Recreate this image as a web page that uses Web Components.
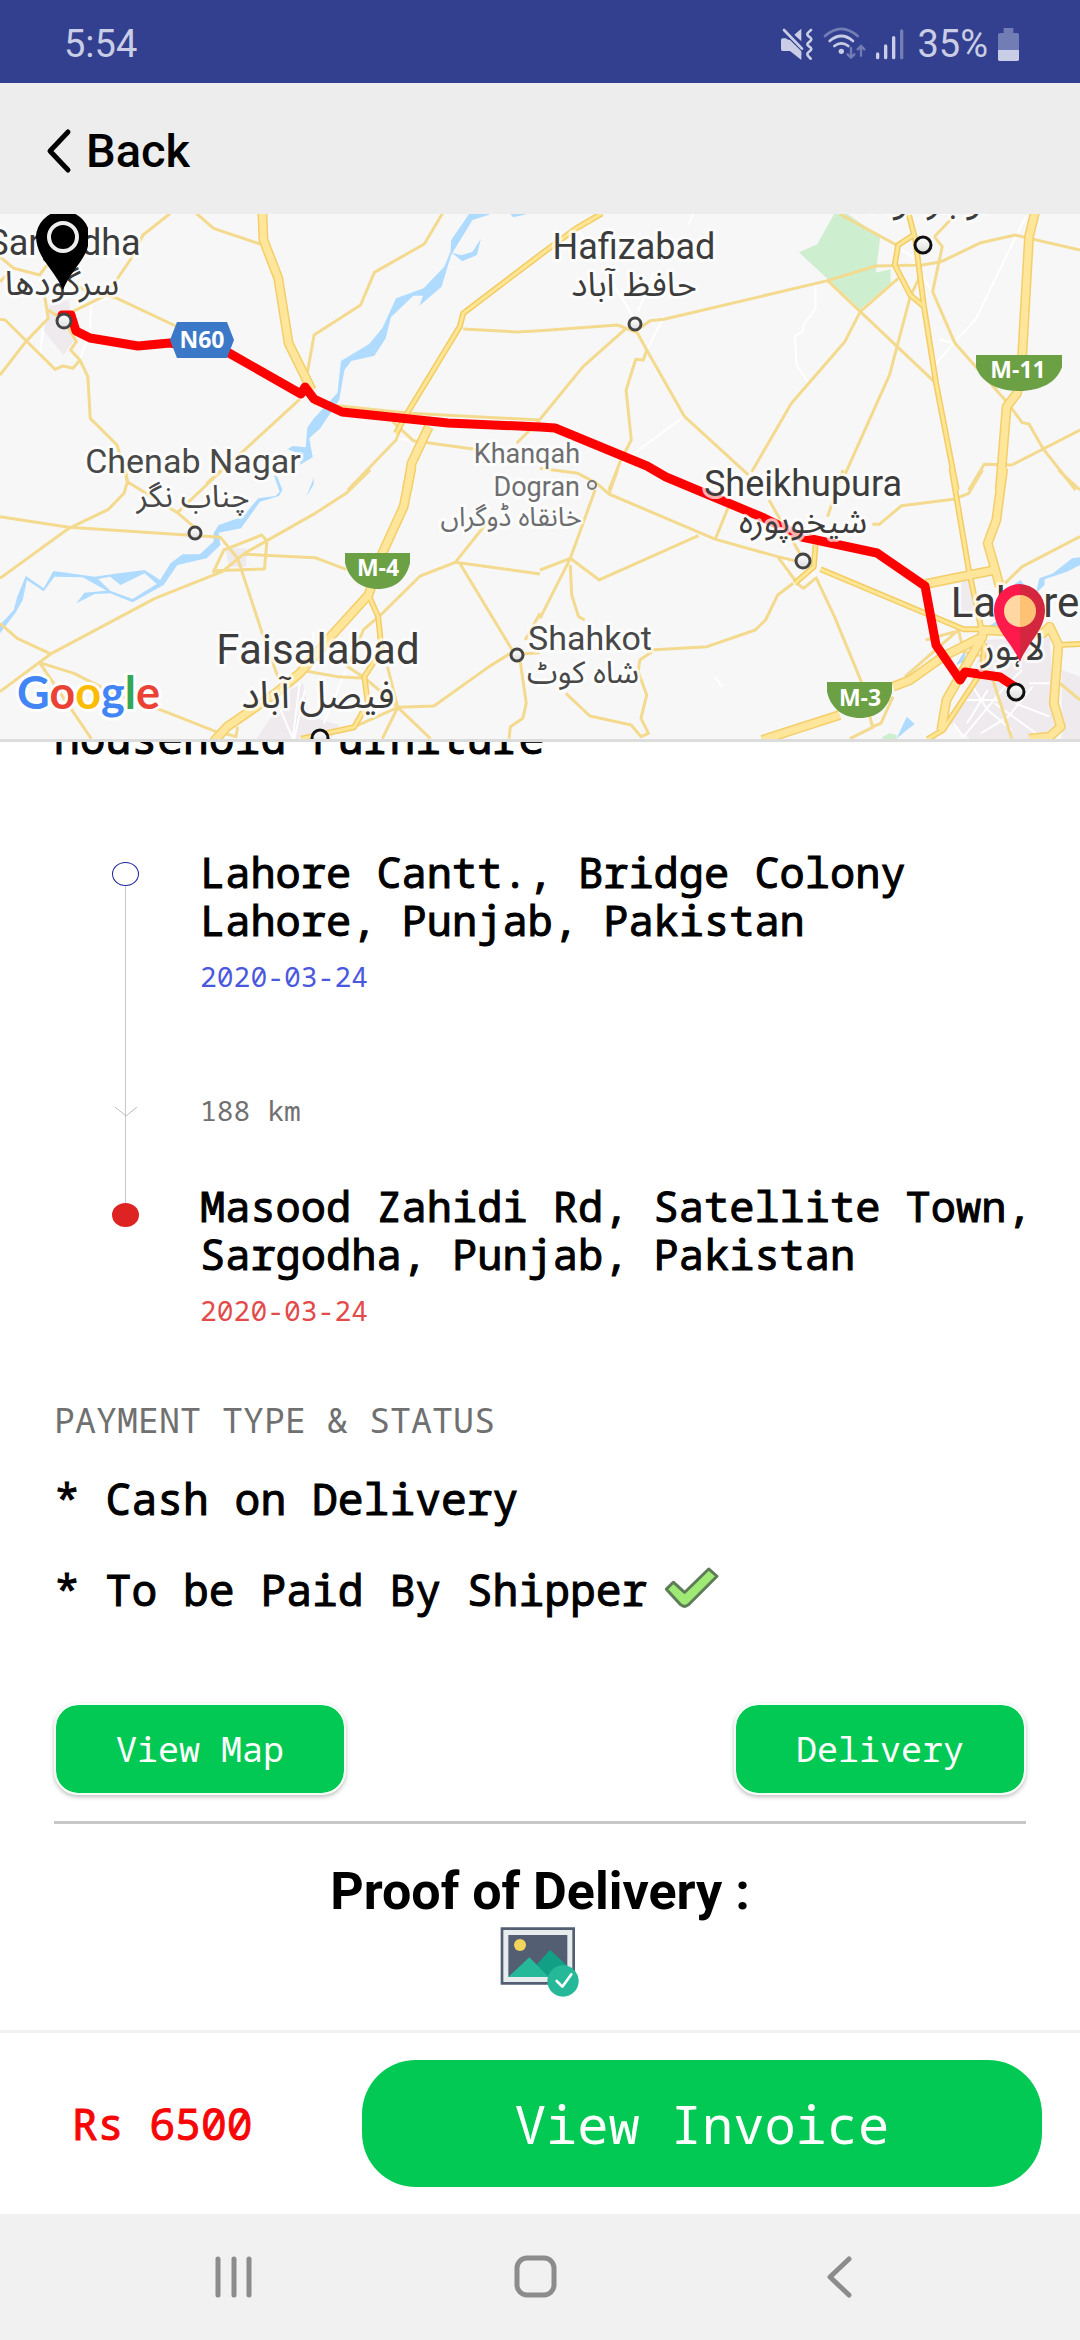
<!DOCTYPE html>
<html lang="en">
<head>
<meta charset="utf-8">
<meta name="viewport" content="width=device-width, initial-scale=1">
<title>Shipment</title>
<style>
  :root {
    --mono: "Droid Sans Mono", "Noto Sans Mono", "DejaVu Sans Mono", monospace;
    --sans: Roboto, sans-serif;
    --green: #02c953;
  }
  body { margin: 0; background: #fff; color: #000; font-family: var(--mono); }
</style>
</head>
<body>
<app-screen>
  <status-bar slot="top" time="5:54" battery="35%"></status-bar>
  <back-header slot="top">Back</back-header>
  <route-map slot="top"></route-map>

  <shipment-details>
    <span slot="title">Household Furniture</span>
    <route-stop slot="route" kind="start" date="2020-03-24">Lahore Cantt., Bridge Colony Lahore, Punjab, Pakistan</route-stop>
    <route-stop slot="route" kind="distance">188 km</route-stop>
    <route-stop slot="route" kind="end" date="2020-03-24">Masood Zahidi Rd, Satellite Town, Sargodha, Punjab, Pakistan</route-stop>
    <payment-line slot="payment">* Cash on Delivery</payment-line>
    <payment-line slot="payment" done>* To be Paid By Shipper</payment-line>
    <green-button slot="actions">View Map</green-button>
    <green-button slot="actions">Delivery</green-button>
  </shipment-details>

  <price-bar slot="bottom" price="Rs 6500"><green-button size="large">View Invoice</green-button></price-bar>
  <system-nav slot="bottom"></system-nav>
</app-screen>

<script>
!(function () {
  // small helper: every element gets an open shadow root with its own style and markup
  const shadow = (el, css, html) => {
    el.attachShadow({ mode: "open" }).innerHTML = `<style>*{box-sizing:border-box}${css}</style>${html}`;
  };

  // ********************************************************** <app-screen>
  customElements.define(
    "app-screen",
    class extends HTMLElement {
      constructor() {
        super();
        shadow(
          this,
          /* css */ `
          :host{display:flex;flex-direction:column;height:100vh}
          header,footer{flex:none}
          main{flex:1;min-height:0;overflow:hidden}`,
          /* html */ `<header><slot name="top"></slot></header><main><slot></slot></main><footer><slot name="bottom"></slot></footer>`
        );
      }
    }
  );

  // ********************************************************** <status-bar>
  customElements.define(
    "status-bar",
    class extends HTMLElement {
      constructor() {
        super();
        shadow(
          this,
          /* css */ `
          :host{display:flex;align-items:center;gap:9px;height:83px;padding:4px 60px 0 64px;box-sizing:border-box;
            background:#33408f;color:#c9cde5;font:38px/44px var(--sans)}
          .time{flex:1}
          .level{padding-left:4px}
          svg{height:34px;display:block;fill:currentColor}
          .line{fill:none;stroke:currentColor;stroke-linecap:round}
          .dim{color:#737db5}`,
          /* html */ `
          <span class="time">${this.getAttribute("time")}</span>
          <svg viewBox="54 45 102 102" width="34" aria-hidden="true">
            <path d="M62 79h10l46 44v21L84 117H62q-5 0-5-5V84q0-5 5-5zM118 50v38L97 68z"/>
            <path d="M72 82l46 46v-10L84 84z"/>
            <path class="line" stroke-width="8" stroke-linecap="butt" d="M66 54l54 56"/>
            <path class="line" stroke-width="8" d="M147 54c-4 5-12 7-11 14s12 7 12 14-12 8-12 15 12 7 12 14-12 8-12 15 6 9 10 14"/>
          </svg>
          <svg viewBox="189 45 129 102" width="43" aria-hidden="true">
            <path class="line dim" stroke-width="8" d="M195 72q49-43 98 0"/>
            <path class="line" stroke-width="8" d="M209 87q35-30 70 0M223 102q21-16 42 0"/>
            <circle cx="244" cy="118" r="8"/>
            <path class="line dim" stroke-width="7" d="M273 108v28m-10-9l10 10 10-10M303 131v-28m-10 9l10-10 10 10"/>
          </svg>
          <svg viewBox="339 45 87 102" width="29" aria-hidden="true">
            <path class="line" stroke-width="10" d="M347 126v11M371 102v35M395 77v60"/>
            <path class="line dim" stroke-width="10" d="M419 57v80"/>
          </svg>
          <span class="level">${this.getAttribute("battery")}</span>
          <svg viewBox="705 45 69 102" width="23" aria-hidden="true">
            <path class="dim" d="M725 48h29v15h12q5 0 5 5v46h-63V68q0-5 5-5h12z"/>
            <path d="M708 114h63v28q0 5-5 5h-53q-5 0-5-5z"/>
          </svg>`
        );
      }
    }
  );

  // ********************************************************** <back-header>
  customElements.define(
    "back-header",
    class extends HTMLElement {
      constructor() {
        super();
        shadow(
          this,
          /* css */ `
          :host{display:flex;align-items:center;height:131px;padding:0 44px;box-sizing:border-box;background:#ededed}
          button{display:flex;align-items:center;gap:14px;padding:4px 0 0;border:0;background:none;color:#000;font:500 47px/56px var(--sans)}
          svg{display:block;fill:none;stroke:currentColor;stroke-width:5;stroke-linecap:round;stroke-linejoin:round}`,
          /* html */ `<button type="button"><svg viewBox="0 0 28 46" width="28" height="46" aria-hidden="true"><path d="M24 4L6 23l18 19"/></svg><slot></slot></button>`
        );
      }
    }
  );

  // ********************************************************** <route-map>
  // the drawing is split in 4 survey sheets, each with its own grid
  const SHEETS = {
    nw: {
      at: "0 -14",
      water: [
        "M1362 42L1310 120L1308 155L1290 200L1230 265L1150 295L1110 385L1072 432L990 483L980 578L912 655L892 683L888 742L850 738L835 748L880 765L870 795L908 772L898 715L930 685L985 600L1000 510L1020 483L1087 467L1120 415L1135 352L1200 287L1228 287L1218 317L1282 260L1310 165L1372 60L1420 44V40Z",
        "M1312 158L1342 184L1385 165L1396 117L1372 155L1340 166Z",
        "M1480 40h60l-50 12z",
      ],
      urban: ["M145 310L200 300L215 420L185 465L125 390Z"],
      local: ["M115 470L130 350", "M205 330L340 285", "M265 315L260 400L232 480L215 505", "M1150 715l35 5"],
      minor: [
        "M495 40L415 105L378 180L335 245L300 290L210 335",
        "M570 40L620 85L755 132",
        "M1285 40L1232 132L1087 217L1047 315L912 405L893 515",
        "M0 170L40 205L115 225L140 190",
        "M0 245L30 215",
        "M215 250L240 268L340 295L510 378",
        "M0 358L15 360L160 508L183 498L212 505L232 480L255 530L262 655L340 735L370 845",
        "M0 525L75 425L140 355L130 290",
        "M140 330L185 360L222 425L205 450L232 480",
        "M870 598L715 745L600 850",
        "M1345 387L1500 396L1568 392",
        "M910 610L1190 640L1568 660",
        "M1140 665L1200 722L1410 752",
        "M1165 680L1150 720L1010 870",
        "M1500 730L1568 660",
      ],
      major: ["M1568 165L1345 340L1335 380L1185 635L1150 700"],
      motorway: ["M762 38L765 120L808 235L838 430L905 570", "M1245 680L1195 790L1182 870"],
    },
    ne: {
      at: "540 -14",
      park: ["M855 40H890L988 110L975 218L1018 208V250L930 328L752 157L805 133Z"],
      local: [
        "M200 230L270 350", "M105 80L145 140", "M445 42L430 75", "M330 220L285 335", "M355 360L310 450", "M420 648L235 790",
        "M800 250V325L765 375L762 395L740 408L745 495L778 545",
        "M1410 50L1265 358L1200 430L1150 490M1160 418L1200 430",
        "M1035 140L1105 185L1045 200M1110 225L1135 270",
      ],
      minor: [
        "M0 392L225 375L275 395L320 362L360 358L835 242L975 198L1110 195L1165 185L1280 128L1380 105L1568 150",
        "M250 385L125 500L0 658",
        "M275 385L310 450L300 480L278 478L250 570L265 720L235 780L200 870",
        "M310 450L420 650L605 825",
        "M870 42L1035 135",
        "M835 242L1150 550",
        "M930 335L1040 235",
        "M930 335L885 425L730 610L615 815",
        "M1105 225L1075 290L1015 525L885 825",
        "M1145 110L1168 140L1140 275L1205 430L1355 605L1400 668L1420 672L1460 745L1555 870",
        "M1145 110L1205 45",
        "M1568 690L1370 795L1290 793L1245 870",
      ],
      major: [
        "M180 40L105 85L0 165",
        "M1070 40L1090 120L1115 320L1150 550L1210 870",
        "M1085 105L1040 135L1030 195L1075 285L1118 322",
      ],
      motorway: ["M1437 38L1420 110L1400 470L1385 580L1355 620L1335 870"],
    },
    sw: {
      at: "0 256",
      water: [
        "M795 15L812 65L800 78L750 85L705 140L635 165L620 190V215L580 253H530L495 280L465 330L420 300L345 310L275 320L155 303L127 355L75 318L50 380L40 420L0 465V490L45 428L66 390L78 330L127 364L158 320L240 322L310 362L245 368L222 400L275 372L320 370L385 397L475 345L515 285L600 265L640 225L635 188L700 175L755 95L810 78L820 60L805 20Z",
        "M890 78L912 22L910 45Z",
      ],
      land: ["M285 327L320 320L350 345L420 310L455 342L385 387L320 362Z"],
      urban: ["M745 806L840 660L880 640L900 740L985 765L960 806Z", "M655 235h60v55h-50z", "M530 190l40-20v25z"],
      local: ["M910 485V600", "M870 640L850 806L790 660", "M885 660L855 806", "M1005 600L940 760"],
      minor: [
        "M365 0L370 35L360 70L315 118L200 175L0 325",
        "M370 35L515 128L565 172L570 190",
        "M645 0L515 128",
        "M0 140L200 172L640 202L690 265L760 485L810 630",
        "M1075 0L1005 70L915 130L775 212L710 250L645 305L450 385L150 550L0 665",
        "M620 305L650 240L760 195L775 212L768 297L620 302Z",
        "M710 253L915 263L1005 298",
        "M0 460L50 505L150 553",
        "M115 578L215 610L330 670L480 725L640 790",
        "M115 578L265 806",
        "M1110 430L1220 318L1322 277L1420 150",
        "M1322 277L1568 312",
        "M1335 280L1490 545L1420 590L1260 708L1155 712L1030 770",
        "M1510 570L1528 700L1518 745L1482 770L1478 806",
        "M1110 430L1055 480L1010 590L1060 625",
        "M870 600L980 620L1060 625L1100 660L1155 712L1250 806",
        "M1110 806L1155 712L1125 590",
        "M690 770L685 800L650 790",
        "M1500 553L1568 548",
        "M1525 510L1568 430",
      ],
      major: ["M1070 375L1098 440L1108 540L1058 620L1068 700L1028 772L875 806"],
      motorway: ["M1195 -10L1172 110L1110 250L1070 375L960 500L870 610L800 670L660 770L620 815"],
    },
    se: {
      at: "540 256",
      water: [
        "M1568 262L1545 265L1490 310L1450 325L1440 370L1465 345V328L1530 305L1568 285Z",
        "M1375 345L1395 330L1410 350Z", "M1295 475L1345 440L1340 470Z", "M1208 585L1240 530L1230 575Z", "M1065 740L1088 762L1068 778L1035 806Z",
      ],
      park: ["M995 800l20-10 20 5v12h-40z"],
      urban: ["M1290 510L1480 500L1490 700L1500 780L1420 808H1250L1190 760L1250 640Z", "M1225 330L1260 340L1270 440H1210Z", "M1515 600L1568 620V808H1515Z"],
      local: [
        "M1250 640L1300 720L1370 780", "M1215 690H1330", "M1300 660L1240 760", "M1400 600L1350 650L1230 800", "M1420 640H1480",
        "M1380 700L1480 740", "M1430 650L1360 740L1280 790", "M1320 700L1440 790", "M1200 760L1230 800", "M510 622l18 30", "M715 265v45", "M785 300l20 25",
      ],
      minor: [
        "M0 -5L110 10L165 40L200 72L510 208L690 260L740 330",
        "M225 0L200 72",
        "M160 60L88 265L0 300",
        "M0 445L88 265L172 330L460 197",
        "M88 285L92 375L112 440L130 450",
        "M320 540L485 530L625 480L655 450L690 375L735 340",
        "M690 260L770 280",
        "M555 90L510 205",
        "M665 90L760 260",
        "M880 0L835 140",
        "M965 163H985L1050 107L1200 88L1245 70L1285 0",
        "M800 320L855 440L935 640L965 770L990 760L1025 680",
        "M325 545L290 570L285 605L310 675L293 745L315 790L293 800L265 765L145 738L75 670",
        "M1505 0L1568 60",
        "M1350 340L1400 290L1568 200",
        "M1120 510L1205 485",
        "M1060 620L1215 480L1230 545L1290 560",
        "M900 806L970 770",
        "M740 335L765 355L800 325",
        "M1510 640L1568 690",
        "M1315 630L1370 806",
      ],
      major: [
        "M800 225L795 290L740 340",
        "M815 298L1230 478H1282",
        "M1195 -5L1245 300L1282 480",
        "M1290 520L1285 600L1170 780L1125 808",
        "M1568 522L1505 525",
      ],
      motorway: [
        "M1120 342L1320 300",
        "M1345 -5L1325 150L1300 220L1322 300L1335 350",
        "M645 810L750 775L870 735",
        "M1025 650L1075 630L1170 560L1285 500V480L1460 490L1480 470L1505 525L1492 700L1512 770L1480 800L1420 806",
        "M1285 500L1180 690L1165 780",
      ],
    },
  };
  // drawn bottom to top, roads with a casing are drawn twice
  const LAYERS = ["urban", "park", "water", "land", "local", "minor", "major casing", "motorway casing", "major", "motorway"];

  // [x, y, radius, colour]
  const TOWNS = [
    [64, 107, 7, "#444"], [635, 110, 6, "#444"], [923, 31, 8, "#111"], [195, 319, 6, "#444"], [592, 271, 4, "#777"],
    [803, 347, 7, "#444"], [1016, 478, 8, "#111"], [517, 441, 6, "#444"], [320, 524, 8, "#111"],
  ];

  // [text, x, baseline, css class]
  const LABELS = [
    ["Sargodha", 64, 41, "city"], ["سرگودھا", 62, 81, "city ur"],
    ["Hafizabad", 634, 45, "city"], ["حافظ آباد", 634, 82, "city ur"],
    ["گوجرانوالہ", 926, -2, "big ur"],
    ["Chenab Nagar", 193, 259, "town"], ["چناب نگر", 193, 293, "town ur"],
    ["Khanqah", 580, 249, "small end"], ["Dogran", 580, 282, "small end"], ["خانقاہ ڈوگراں", 511, 312, "small ur"],
    ["Sheikhupura", 803, 282, "city"], ["شیخوپورہ", 803, 319, "city ur"],
    ["Shahkot", 590, 436, "town"], ["شاہ کوٹ", 583, 469, "town ur"],
    ["Lahore", 1015, 403, "big"], ["لاہور", 1013, 446, "big ur"],
    ["Faisalabad", 318, 450, "big"], ["فیصل آباد", 318, 494, "big ur"],
  ];

  customElements.define(
    "route-map",
    class extends HTMLElement {
      constructor() {
        super();
        shadow(
          this,
          /* css */ `
          :host{display:block;border-bottom:3px solid #dcdcdc;background:#f7f7f7}
          svg{display:block;width:100%;height:auto;overflow:hidden}
          path{fill:none;stroke-linejoin:round}
          .sheet path{vector-effect:non-scaling-stroke}
          .sheet .water{fill:#aedbff}
          .sheet .park{fill:#cdeecf}
          .sheet .urban{fill:#eeeaee}
          .sheet .land{fill:#f7f7f7}
          .local{stroke:#fff;stroke-width:2}
          .minor{stroke:#f4da8e;stroke-width:3}
          .major{stroke:#ffe694;stroke-width:3}
          .major.casing{stroke:#f3cc66;stroke-width:6}
          .motorway{stroke:#ffe69b;stroke-width:7}
          .motorway.casing{stroke:#f4ce69;stroke-width:10}
          .route{stroke:red;stroke-width:9;stroke-linecap:round}
          text{font-family:var(--sans);text-anchor:middle;fill:#3c3c3c;stroke:#fff;stroke-opacity:.7;stroke-width:6;stroke-linejoin:round;paint-order:stroke}
          .city{font-size:36px}
          .town{font-size:34px;fill:#484848}
          .big{font-size:42px}
          .small{font-size:27px;fill:#6c6e70}
          .end{text-anchor:end}
          .ur{font-family:"Noto Sans Arabic","DejaVu Sans",sans-serif}
          .city.ur{font-size:34px}
          .town.ur{font-size:31px}
          .big.ur{font-size:38px}
          .small.ur{font-size:27px}
          .shield{font:700 23px "Open Sans",sans-serif;fill:#fff;stroke:none}
          .google{font:700 45px Lato,sans-serif;text-anchor:start;stroke-opacity:1}`,
          /* html */ `
          <svg viewBox="0 0 1080 525" role="img" aria-label="Route from Lahore to Sargodha">
            ${LAYERS.map((layer) => this.layer(layer)).join("")}
            <path class="route" d="M62 101L71 101L76 117L90 124L138 132L170 129L229 139L301 180L305 173L314 185L342 198L448 209L540 213L555 214L647 252L666 263L764 304L802 323L877 339L925 372L936 431L960 466L965 458L1000 463L1015 473"/>
            <defs><linearGradient id="knob" x2="0" y2="1"><stop stop-color="#fff"/><stop offset="1" stop-color="#ddd"/></linearGradient></defs>
            ${TOWNS.map(([x, y, r, color]) => `<circle cx="${x}" cy="${y}" r="${r}" fill="url(#knob)" stroke="${color}" stroke-width="${r < 5 ? 2 : 3}"/>`).join("")}
            ${LABELS.map(([text, x, y, css]) => `<text x="${x}" y="${y}" class="${css}">${text}</text>`).join("")}
            <path d="M177 108h50l7 18-7 18h-50l-7-18z" style="fill:#3b78c8"/>
            <text class="shield" x="202" y="134">N60</text>
            <path d="M976 141h86v12c-5 15-21 24-43 24s-38-9-43-24z" style="fill:#6ca044"/>
            <text class="shield" x="1018" y="164">M-11</text>
            <path d="M345 339h65v10c-4 17-16 26-32 26s-29-9-33-26z" style="fill:#6ca044"/>
            <text class="shield" x="378" y="362">M-4</text>
            <path d="M827 468h65v10c-4 17-16 26-32 26s-29-9-33-26z" style="fill:#6ca044"/>
            <text class="shield" x="860" y="492">M-3</text>
            <text class="google" x="17" y="495"><tspan fill="#4285f4">G</tspan><tspan fill="#ea4335">o</tspan><tspan fill="#fbbc05">o</tspan><tspan fill="#4285f4">g</tspan><tspan fill="#34a853">l</tspan><tspan fill="#ea4335">e</tspan></text>
            <path d="M63 76C55 56 36 44 36 22A27 27 0 0 1 88 14V32C85 46 70 58 63 76z" style="fill:#000"/>
            <circle cx="63" cy="23" r="14" fill="none" stroke="#eee" stroke-width="4"/>
            <path d="M1020 448C1012 428 994 416 994 396A26 26 0 0 1 1020 370z" style="fill:#ff1a4b"/>
            <path d="M1020 448C1028 428 1045 416 1045 396A26 26 0 0 0 1020 370z" style="fill:#d4263f"/>
            <path d="M1020 413A16 16 0 0 1 1020 381z" style="fill:#ffd7a3"/>
            <path d="M1020 413A16 16 0 0 0 1020 381z" style="fill:#ffc274"/>
          </svg>`
        );
      }
      // ======================================================== <route-map>.layer
      layer(name) {
        let kind = name.split(" ")[0];
        return Object.values(SHEETS)
          .filter((sheet) => sheet[kind])
          .map((sheet) => `<g class="sheet" transform="translate(${sheet.at}) scale(.3444 .3333)"><path class="${name}" d="${sheet[kind].join("")}"/></g>`)
          .join("");
      }
    }
  );

  // ********************************************************** <shipment-details>
  customElements.define(
    "shipment-details",
    class extends HTMLElement {
      constructor() {
        super();
        shadow(
          this,
          /* css */ `
          :host{display:block;padding:0 54px}
          h1,h2,h3{margin:0;font-weight:400}
          /* the list is scrolled, the title is half under the map */
          h1{margin-top:-32px;font-size:43px;line-height:56px;-webkit-text-stroke:1px}
          .route{margin:82px -34px 0 58px}
          h2{margin-top:66px;font-size:35px;line-height:48px;color:#707070}
          .payment{display:grid;gap:35px;margin-top:27px}
          .actions{display:flex;justify-content:space-between;margin-top:85px}
          hr{margin:26px 0 0;border:0;border-top:3px solid #c6c7c7}
          h3{margin-top:36px;font:700 52px/64px var(--sans);text-align:center}
          .proof{display:block;margin:2px auto 0}`,
          /* html */ `
          <h1><slot name="title"></slot></h1>
          <div class="route"><slot name="route"></slot></div>
          <h2>PAYMENT TYPE &amp; STATUS</h2>
          <div class="payment"><slot name="payment"></slot></div>
          <div class="actions"><slot name="actions"></slot></div>
          <hr>
          <h3>Proof of Delivery :</h3>
          <svg class="proof" viewBox="118 78 240 216" width="80" height="72" role="img" aria-label="Proof picture">
            <path fill="#545e73" d="M120 82h223v172H120z"/>
            <path fill="#e7eced" d="M128 90h207v156H128z"/>
            <path fill="#545e73" d="M143 105h177v126H143z"/>
            <circle cx="178" cy="135" r="18" fill="#f3d55b"/>
            <path fill="#11a085" d="M228 194l40-45 52 48v34h-60z"/>
            <path fill="#26b999" d="M143 231l63-59 58 59z"/>
            <circle cx="307" cy="243" r="47" fill="#26b999"/>
            <path fill="none" stroke="#fff" stroke-width="8" stroke-linecap="round" stroke-linejoin="round" d="M288 243l17 17 27-37"/>
          </svg>`
        );
      }
    }
  );

  // ********************************************************** <route-stop kind="start|distance|end">
  customElements.define(
    "route-stop",
    class extends HTMLElement {
      constructor() {
        super();
        let date = this.getAttribute("date");
        shadow(
          this,
          /* css */ `
          :host{display:grid;grid-template-columns:27px 1fr;column-gap:61px}
          .rail{display:flex;flex-direction:column;align-items:center}
          .rail::before,.rail::after{content:"";width:1px;background:#c8c8c8}
          .rail::before{height:14px}
          .rail::after{flex:1}
          i{width:27px;height:24px;border-radius:50%}
          svg{display:none}
          .text{font-size:42px;line-height:48px;-webkit-text-stroke:1px}
          time{display:block;margin-top:12px;font-size:28px;line-height:40px}
          :host([kind=start]){min-height:244px}
          :host([kind=start]) i{border:1px solid #1c269e}
          :host([kind=start]) .rail::before{background:none}
          :host([kind=start]) time{color:#4a58dd}
          :host([kind=distance]) .rail::before{height:25px}
          :host([kind=distance]) i{display:none}
          :host([kind=distance]) svg{display:block;margin-top:-10px;fill:none;stroke:#bbb}
          :host([kind=distance]) .text{min-height:90px;padding:2px 0 0;font-size:28px;line-height:32px;color:#707070;-webkit-text-stroke:0}
          :host([kind=end]) .rail{height:45px}
          :host([kind=end]) .rail::before{height:21px}
          :host([kind=end]) .rail::after{content:none}
          :host([kind=end]) i{background:#de2323}
          :host([kind=end]) time{color:#e34a4a}`,
          /* html */ `
          <div class="rail"><i></i><svg viewBox="0 0 24 10" width="24" height="10" aria-hidden="true"><path d="M1 0l11 9L23 0"/></svg></div>
          <div><div class="text"><slot></slot></div>${date ? `<time datetime="${date}">${date}</time>` : ""}</div>`
        );
      }
    }
  );

  // ********************************************************** <payment-line done>
  customElements.define(
    "payment-line",
    class extends HTMLElement {
      constructor() {
        super();
        shadow(
          this,
          /* css */ `
          :host{display:flex;gap:16px;font-size:43px;line-height:56px;-webkit-text-stroke:1px}
          svg{display:none;margin-top:4px;stroke-linejoin:round}
          :host([done]) svg{display:block}`,
          /* html */ `<slot></slot><svg viewBox="70 75 170 130" width="57" height="43" role="img" aria-label="done"><path fill="#9eea74" stroke="#5f7c58" stroke-width="9" d="M79 145l21-21 34 31 73-71 25 22-86 86q-12 10-24 0z"/></svg>`
        );
      }
    }
  );

  // ********************************************************** <green-button size="large">
  customElements.define(
    "green-button",
    class extends HTMLElement {
      constructor() {
        super();
        shadow(
          this,
          /* css */ `
          :host{display:block}
          button{width:292px;height:92px;padding:0;border:2px solid #f4fff8;border-radius:24px;background:var(--green) padding-box;color:#fff;
            font:35px/44px var(--mono);box-shadow:0 2px 4px rgba(0,0,0,.25)}
          :host([size=large]) button{width:100%;height:127px;border:0;border-radius:54px;font-size:52px;line-height:64px;box-shadow:none}`,
          /* html */ `<button type="button"><slot></slot></button>`
        );
      }
    }
  );

  // ********************************************************** <price-bar>
  customElements.define(
    "price-bar",
    class extends HTMLElement {
      constructor() {
        super();
        shadow(
          this,
          /* css */ `
          :host{display:grid;grid-template-columns:290px 1fr;align-items:center;padding:27px 38px 27px 72px;border-top:3px solid #f2f2f2;background:#fff}
          strong{font-size:43px;line-height:56px;font-weight:400;color:#f60606;-webkit-text-stroke:1px}`,
          /* html */ `<strong>${this.getAttribute("price")}</strong><slot></slot>`
        );
      }
    }
  );

  // ********************************************************** <system-nav>
  customElements.define(
    "system-nav",
    class extends HTMLElement {
      constructor() {
        super();
        shadow(
          this,
          /* css */ `
          :host{display:flex;justify-content:space-between;align-items:center;height:126px;padding:0 214px 0 208px;box-sizing:border-box;background:#f1f1f1}
          button{width:52px;height:52px;padding:0;border:0;background:none;color:#8c8c8c}
          svg{display:block;fill:none;stroke:currentColor;stroke-width:5;stroke-linecap:round;stroke-linejoin:round}`,
          /* html */ `
          <button type="button" aria-label="Recent apps"><svg viewBox="0 0 52 52"><path d="M10 8v36M26 8v36M41 8v36"/></svg></button>
          <button type="button" aria-label="Home"><svg viewBox="0 0 52 52"><rect x="6" y="7" width="37" height="37" rx="10"/></svg></button>
          <button type="button" aria-label="Back"><svg viewBox="0 0 52 52"><path d="M35 8L16 26l19 18"/></svg></button>`
        );
      }
    }
  );
})();
</script>
</body>
</html>
